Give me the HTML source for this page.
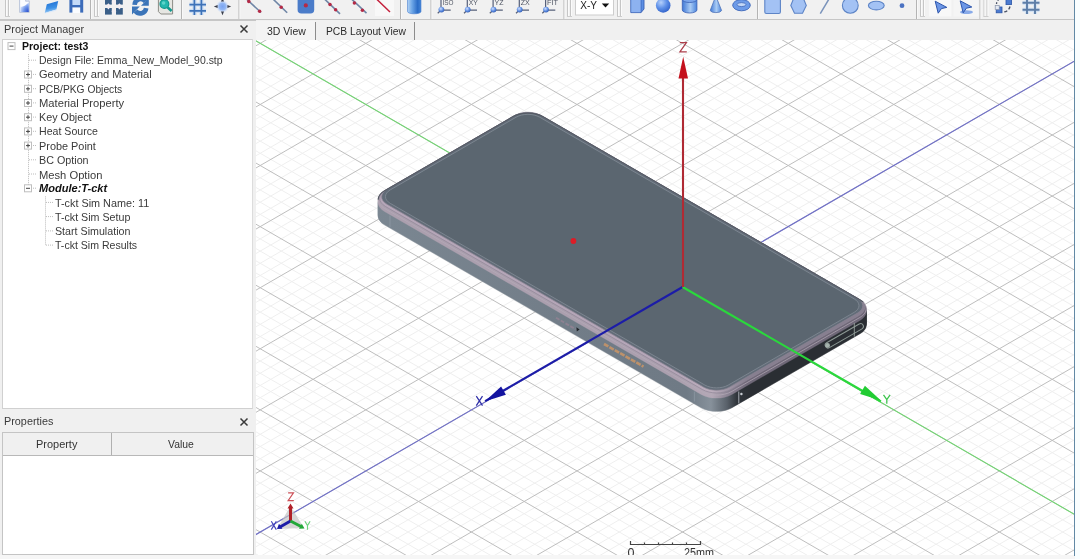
<!DOCTYPE html>
<html><head><meta charset="utf-8">
<style>
html,body{margin:0;padding:0;}
html{background:#f0f0f0;}
#wrap{position:absolute;left:0;top:0;width:1080px;height:559px;filter:blur(0.45px);will-change:transform;}
body{width:1080px;height:559px;overflow:hidden;background:#f0f0f0;position:relative;font-family:"Liberation Sans",sans-serif;font-size:11px;color:#222;}
.abs{position:absolute;}
#toolbar{left:0;top:0;width:1075px;height:18.6px;background:#f1f1f1;border-bottom:2px solid #c6c6c6;}
#right{left:1075px;top:0;width:5px;height:559px;background:#f9feff;}
#rightTop{display:none;}
#vline{left:1073.8px;top:0;width:1.3px;height:555.5px;background:#6189a5;}
#pmhead{left:0;top:20px;width:254px;height:20px;}
.ptitle{position:absolute;left:3.6px;top:3px;font-size:11.4px;color:#3a3a3a;white-space:nowrap;transform-origin:0 0;}
.closex{position:absolute;left:239px;top:4px;width:10px;height:10px;}
#tree{left:2px;top:39px;width:249px;height:368px;background:#fff;border:1px solid #d0d0d0;border-right-color:#dcdcdc;}
#prophead{left:0;top:411px;width:254px;height:21px;}
#proptable{left:2px;top:432px;width:249.5px;height:121px;background:#fff;border:1px solid #c4c4c4;}
#propth{left:0;top:0;width:250px;height:22px;background:#f0f0f0;border-bottom:1px solid #b8b8b8;}
.th{position:absolute;top:4.5px;font-size:11.4px;color:#333;white-space:nowrap;transform-origin:0 0;}
#tabs{left:256px;top:20px;width:818px;height:20px;background:#f0f0f0;}
.tab{position:absolute;top:4.5px;font-size:11.3px;color:#2c2c2c;white-space:nowrap;transform-origin:0 0;}
.tsep{position:absolute;top:1.5px;width:1.4px;height:18.5px;background:#8c8c8c;}
#vp{left:256px;top:40px;width:818px;height:515px;background:#fff;overflow:hidden;}
#bottom{left:0;top:555px;width:1080px;height:4px;background:#f6f6f6;}
.ti{position:absolute;transform-origin:0 0;white-space:nowrap;font-size:11.3px;color:#3a3a3a;line-height:14px;height:14px;}
.b{font-weight:bold;color:#111;}
</style></head><body><div id="wrap">
<div id="toolbar" class="abs"><!--TB--><svg class="abs" style="left:0;top:0" width="1075" height="19" viewBox="0 0 1075 19">
<defs>
<linearGradient id="bl" x1="0" y1="0" x2="1" y2="1"><stop offset="0" stop-color="#cfe0fa"/><stop offset="0.5" stop-color="#6f9be6"/><stop offset="1" stop-color="#3565c0"/></linearGradient>
<linearGradient id="blh" x1="0" y1="0" x2="1" y2="0"><stop offset="0" stop-color="#3f78d6"/><stop offset="0.55" stop-color="#a9cbf4"/><stop offset="1" stop-color="#4a84dc"/></linearGradient>
<radialGradient id="sph" cx="0.35" cy="0.3" r="0.8"><stop offset="0" stop-color="#b5d0fb"/><stop offset="0.5" stop-color="#5d8fe8"/><stop offset="1" stop-color="#2c5cc4"/></radialGradient>
<radialGradient id="ball" cx="0.4" cy="0.35" r="0.7"><stop offset="0" stop-color="#cfe0ff"/><stop offset="0.6" stop-color="#5a8ae0"/><stop offset="1" stop-color="#2f59b0"/></radialGradient>
<radialGradient id="nd" cx="1" cy="1" r="1.1"><stop offset="0" stop-color="#2348c8"/><stop offset="0.55" stop-color="#6f95ea"/><stop offset="1" stop-color="#dbe6fb"/></radialGradient>
<linearGradient id="fo" x1="0.3" y1="0" x2="0.5" y2="1"><stop offset="0" stop-color="#1f6fd2"/><stop offset="0.6" stop-color="#3f92e6"/><stop offset="1" stop-color="#a9d4f8"/></linearGradient>
<radialGradient id="glow" cx="0.5" cy="0.5" r="0.5"><stop offset="0" stop-color="#7aa4f2"/><stop offset="0.55" stop-color="#94b8f4"/><stop offset="1" stop-color="#dfeafc" stop-opacity="0.2"/></radialGradient>
<linearGradient id="blc" x1="0" y1="0" x2="1" y2="0"><stop offset="0" stop-color="#b4d4f6"/><stop offset="0.35" stop-color="#6aa4e6"/><stop offset="0.75" stop-color="#2b6cc6"/><stop offset="1" stop-color="#4585d6"/></linearGradient>
<g id="grip"><path d="M0.5 0V16.5M3.5 0V16.5" stroke="#c6c6c6" stroke-width="1"/><path d="M1.5 0V16.5M4.5 0V16.5" stroke="#fbfbfb" stroke-width="1"/><path d="M0 16.5H5" stroke="#cdcdcd"/></g>
<g id="sep"><path d="M0.5 0V19" stroke="#b4b4b4" stroke-width="1"/><path d="M1.5 0V19" stroke="#f8f8f8" stroke-width="1"/></g>
<g id="vw"><path d="M1.8 9.5V0M2.5 10.2H11.5" stroke="#56607a" stroke-width="1.2" fill="none"/><path d="M2 10L-1.5 13.3" stroke="#56607a" stroke-width="1.2"/><circle cx="2.2" cy="9.6" r="2.9" fill="url(#ball)"/></g>
</defs>
<use href="#grip" x="5"/>
<use href="#sep" x="90"/><use href="#grip" x="94"/>
<use href="#sep" x="181"/><use href="#sep" x="238.5"/>
<use href="#sep" x="400"/><use href="#sep" x="430.5"/>
<use href="#sep" x="563.5"/><use href="#grip" x="567"/>
<use href="#grip" x="617"/>
<use href="#sep" x="757"/>
<use href="#sep" x="916"/><use href="#grip" x="920"/>
<use href="#sep" x="979.5"/><use href="#grip" x="983.5"/>
<path d="M19.6 -3H25.6L29.3 1.2V12.4H19.6Z" fill="#fbfcff" stroke="#b4bfd6" stroke-width="0.9"/><path d="M25.6 -3V1.2H29.3" fill="#dfe6f4" stroke="#aab6d0" stroke-width="0.7"/><path d="M20.3 12V6.5C23 7.5 26 5 28.8 2.5V12Z" fill="url(#nd)"/>
<path d="M46.8 4.2L58.2 1.1L56.4 9.6L44.8 12.9Z" fill="url(#fo)"/><path d="M44.8 12.9L56.4 9.6L56.1 10.8L45 13.6Z" fill="#dbe9fb"/>
<rect x="69.4" y="-3" width="13.8" height="15.6" fill="#3c6cba"/><rect x="72.4" y="-3" width="7.8" height="8" fill="#c4daf8"/><rect x="72.4" y="7.4" width="7.8" height="5.6" fill="#fafcff"/>
<g fill="#3b5f88"><path d="M105 -1h6.8v5.6H105z"/><path d="M116 -1h6.8v5.6h-6.8z"/><path d="M105 8h6.8v6.6H105z"/><path d="M116 8h6.8v6.6h-6.8z"/></g><g fill="#f3eef2"><path d="M108.4 3.2l2.6 3.1-2.6 3.1-2.6-3.1z"/><path d="M119.4 3.2l2.6 3.1-2.6 3.1-2.6-3.1z"/><path d="M113.9 -0.5l2.4 2.6-2.4 2.6-2.4-2.6z"/><path d="M113.9 8.6l2.4 2.6-2.4 2.6-2.4-2.6z"/></g>
<g fill="none" stroke="#3b74b8" stroke-width="4.6"><path d="M134.6 4.8A6 6 0 0 1 145.5 1.6"/><path d="M146.2 8.2A6 6 0 0 1 135.5 11"/></g><path d="M148.8 -2V5.8H141Z" fill="#3b74b8"/><path d="M132 14.4V6.6H139.8Z" fill="#3b74b8"/>
<path d="M158.4 -3H172.6V14H160.8L158.4 11.6Z" fill="#e6e6e2" stroke="#8c8c86" stroke-width="1"/><circle cx="164.4" cy="4" r="4.4" fill="#25b8ae" stroke="#12998f" stroke-width="1.2"/><circle cx="163.6" cy="3" r="1.8" fill="#5fd4ca"/><path d="M167.5 7.2L171.6 11" stroke="#12998f" stroke-width="2.6"/>
<g stroke="#c3daf6" stroke-width="4.4" opacity="0.75"><path d="M194.4 -2V15M201.4 -2V15M189.4 4.6H206M189.4 10.9H206"/></g><g stroke="#3d72b8" stroke-width="1.7"><path d="M194.4 -2V15M201.4 -2V15M189.4 4.6H206M189.4 10.9H206"/></g>
<circle cx="222.5" cy="6.5" r="6.4" fill="url(#glow)"/><path d="M213.8 6.5l3.8 -1.5v3zM231.2 6.5l-3.8 -1.5v3zM222.5 15.2l-1.5 -3.8h3zM222.5 -2.2l-1.5 3.8h3z" fill="#3a3f4c"/>
<path d="M246.5 -1L261 12.5" stroke="#6f86a6" stroke-width="1.6"/><circle cx="248.8" cy="1.6" r="1.75" fill="#b42a46"/><circle cx="259.6" cy="11.2" r="1.75" fill="#b42a46"/>
<path d="M273 -1L287.2 12.8" stroke="#6f86a6" stroke-width="1.6"/><circle cx="281.2" cy="7.3" r="1.75" fill="#b42a46"/>
<rect x="297.6" y="-4" width="16.6" height="17.6" rx="3.8" fill="#4b7cc9"/><circle cx="305.8" cy="5.4" r="2.1" fill="#b42a46"/>
<path d="M324.5 -1L340 13.8" stroke="#6f86a6" stroke-width="1.6"/><circle cx="330" cy="4.4" r="1.75" fill="#b42a46"/><circle cx="335.6" cy="9.8" r="1.75" fill="#b42a46"/>
<path d="M351.5 -1L366.5 13.2" stroke="#6f86a6" stroke-width="1.6"/><circle cx="354.4" cy="2.9" r="1.75" fill="#b42a46"/><circle cx="362.4" cy="10.3" r="1.75" fill="#b42a46"/>
<rect x="375" y="0" width="19" height="16" fill="#f8f8f8"/><path d="M377 -0.5L390 12" stroke="#c4203c" stroke-width="1.5"/>
<path d="M407.5 -3H421V11.5A6.75 2.3 0 0 1 407.5 11.5Z" fill="url(#blc)" stroke="#4a80d0" stroke-width="0.6"/>
<use href="#vw" x="439.2"/><text x="442.4" y="5.1" font-family="Liberation Sans, sans-serif" font-size="8" fill="#505664" textLength="11" lengthAdjust="spacingAndGlyphs">ISO</text>
<use href="#vw" x="465.5"/><text x="468.7" y="5.1" font-family="Liberation Sans, sans-serif" font-size="8" fill="#505664" textLength="9" lengthAdjust="spacingAndGlyphs">XY</text>
<use href="#vw" x="491.3"/><text x="494.5" y="5.1" font-family="Liberation Sans, sans-serif" font-size="8" fill="#505664" textLength="9" lengthAdjust="spacingAndGlyphs">YZ</text>
<use href="#vw" x="517.5"/><text x="520.7" y="5.1" font-family="Liberation Sans, sans-serif" font-size="8" fill="#505664" textLength="9" lengthAdjust="spacingAndGlyphs">ZX</text>
<use href="#vw" x="543.8"/><text x="547.0" y="5.1" font-family="Liberation Sans, sans-serif" font-size="8" fill="#505664" textLength="11" lengthAdjust="spacingAndGlyphs">FIT</text>
<rect x="575.5" y="-2" width="38" height="17" fill="#fff" stroke="#cdcdcd" stroke-width="1"/><text x="580.3" y="9.2" font-family="Liberation Sans, sans-serif" font-size="11.3" fill="#222" textLength="16.8" lengthAdjust="spacingAndGlyphs">X-Y</text><path d="M601.8 3.6h7.4l-3.7 4z" fill="#111"/>
<path d="M630.8 -0.5L633.8 -3H644V9L641 12.6H630.8Z" fill="#5c8fe4" stroke="#3960b4" stroke-width="0.9"/><path d="M630.8 -0.5H641V12.6M641 -0.5L644 -3" fill="none" stroke="#3960b4" stroke-width="0.8"/><rect x="631.3" y="0" width="9.3" height="12.2" fill="#8db2f0"/>
<circle cx="663.2" cy="5.4" r="7.3" fill="url(#sph)"/>
<path d="M682.3 -1V10A7.3 3 0 0 0 696.9 10V-1Z" fill="url(#blh)" stroke="#3960b4" stroke-width="0.8"/><ellipse cx="689.6" cy="-0.5" rx="7.3" ry="3" fill="#7ba6ec" stroke="#3960b4" stroke-width="0.8"/>
<path d="M715.8 -4L710.2 10.5A5.8 2.6 0 0 0 721.6 10.5Z" fill="url(#blh)" stroke="#5074b8" stroke-width="0.8"/>
<ellipse cx="741.5" cy="5.2" rx="8.8" ry="5.6" fill="#6d9be8" stroke="#3d66b8" stroke-width="0.9"/><ellipse cx="741.5" cy="4.6" rx="4.4" ry="2" fill="#c4d8f6" stroke="#3d66b8" stroke-width="0.8"/>
<rect x="764.8" y="-4" width="15.6" height="17.5" rx="1.6" fill="#a3c2f4" stroke="#5d84c6" stroke-width="1.1"/>
<path d="M794 -2.5H803L806.3 5.5L802.5 13.2H794.5L790.8 5.5Z" fill="#a3c2f4" stroke="#5d84c6" stroke-width="1.1"/>
<path d="M829 -1L820.3 13.6" stroke="#7a93bb" stroke-width="1.5"/>
<circle cx="850.3" cy="5.4" r="7.9" fill="#a3c2f4" stroke="#5d84c6" stroke-width="1.1"/>
<ellipse cx="876.3" cy="5.6" rx="7.9" ry="4.3" fill="#a3c2f4" stroke="#5d84c6" stroke-width="1.1"/>
<circle cx="902" cy="5.7" r="2.4" fill="#4b72c2"/>
<rect x="929" y="0" width="22.5" height="16.5" fill="#f8f8f8"/><rect x="953.5" y="0" width="25" height="16.5" fill="#f5f5f5"/>
<path d="M935.2 1.2L946.8 7.4L941.4 8.6L938.2 13.2Z" fill="#6d97e6" stroke="#2d55ac" stroke-width="1"/>
<ellipse cx="966.5" cy="12.2" rx="6.4" ry="1.9" fill="#6d97e6" opacity="0.8"/><path d="M960.2 0.8L971.8 7L966.4 8.2L963.2 12.8Z" fill="#6d97e6" stroke="#2d55ac" stroke-width="1"/>
<rect x="1006" y="-1" width="5.6" height="5.6" fill="#4b7ad0" stroke="#2c55a6" stroke-width="0.8"/><rect x="996.2" y="7" width="5.8" height="5.8" fill="#4b7ad0" stroke="#2c55a6" stroke-width="0.8"/><rect x="995.2" y="5.6" width="4" height="4" fill="#e4e9f2" stroke="#8892a8" stroke-width="0.7"/><path d="M1000 -1.5A7 7 0 0 0 996.5 4M1010 6.5A7 7 0 0 1 1003 12" fill="none" stroke="#4a5266" stroke-width="1.3" stroke-dasharray="3.2 1.8"/>
<g stroke="#cfe0f4" stroke-width="4.2" opacity="0.8"><path d="M1027 -2V14M1035 -2V14M1022.5 2.8H1039.5M1022.5 9.8H1039.5"/></g><g stroke="#5d7ea8" stroke-width="1.9"><path d="M1027 -2V14M1035 -2V14M1022.5 2.8H1039.5M1022.5 9.8H1039.5"/></g>
</svg><!--/TB--></div>
<div id="pmhead" class="abs"><span class="ptitle" id="pt1" style="transform:scaleX(0.9584)">Project Manager</span>
<svg class="closex" viewBox="0 0 10 10"><path d="M1.5 1.5 L8.5 8.5 M8.5 1.5 L1.5 8.5" stroke="#3a3a3a" stroke-width="1.5"/></svg></div>
<div id="tree" class="abs"><!--TR--><svg class="abs" style="left:-3px;top:-40px" width="254" height="408" viewBox="0 0 254 408"><path d="M28.5 54.2V188.2" stroke="#bcbcbc" stroke-width="1" stroke-dasharray="1 1"/><path d="M45.5 196.4V245.1" stroke="#bcbcbc" stroke-width="1" stroke-dasharray="1 1"/><rect x="8.0" y="42.6" width="7" height="7" fill="#fff" stroke="#bebebe" stroke-width="1"/><path d="M9.5 46.1h4" stroke="#444" stroke-width="1"/><path d="M29 60.2H36" stroke="#bcbcbc" stroke-width="1" stroke-dasharray="1 1"/><path d="M29 74.4H36" stroke="#bcbcbc" stroke-width="1" stroke-dasharray="1 1"/><rect x="24.5" y="71.0" width="7" height="7" fill="#fff" stroke="#bebebe" stroke-width="1"/><path d="M26.0 74.5h4" stroke="#444" stroke-width="1"/><path d="M28.0 72.5v4" stroke="#444" stroke-width="1"/><path d="M29 88.7H36" stroke="#bcbcbc" stroke-width="1" stroke-dasharray="1 1"/><rect x="24.5" y="85.3" width="7" height="7" fill="#fff" stroke="#bebebe" stroke-width="1"/><path d="M26.0 88.8h4" stroke="#444" stroke-width="1"/><path d="M28.0 86.8v4" stroke="#444" stroke-width="1"/><path d="M29 102.9H36" stroke="#bcbcbc" stroke-width="1" stroke-dasharray="1 1"/><rect x="24.5" y="99.5" width="7" height="7" fill="#fff" stroke="#bebebe" stroke-width="1"/><path d="M26.0 103.0h4" stroke="#444" stroke-width="1"/><path d="M28.0 101.0v4" stroke="#444" stroke-width="1"/><path d="M29 117.1H36" stroke="#bcbcbc" stroke-width="1" stroke-dasharray="1 1"/><rect x="24.5" y="113.7" width="7" height="7" fill="#fff" stroke="#bebebe" stroke-width="1"/><path d="M26.0 117.2h4" stroke="#444" stroke-width="1"/><path d="M28.0 115.2v4" stroke="#444" stroke-width="1"/><path d="M29 131.3H36" stroke="#bcbcbc" stroke-width="1" stroke-dasharray="1 1"/><rect x="24.5" y="127.9" width="7" height="7" fill="#fff" stroke="#bebebe" stroke-width="1"/><path d="M26.0 131.4h4" stroke="#444" stroke-width="1"/><path d="M28.0 129.4v4" stroke="#444" stroke-width="1"/><path d="M29 145.5H36" stroke="#bcbcbc" stroke-width="1" stroke-dasharray="1 1"/><rect x="24.5" y="142.1" width="7" height="7" fill="#fff" stroke="#bebebe" stroke-width="1"/><path d="M26.0 145.6h4" stroke="#444" stroke-width="1"/><path d="M28.0 143.6v4" stroke="#444" stroke-width="1"/><path d="M29 159.8H36" stroke="#bcbcbc" stroke-width="1" stroke-dasharray="1 1"/><path d="M29 174.0H36" stroke="#bcbcbc" stroke-width="1" stroke-dasharray="1 1"/><path d="M29 188.2H36" stroke="#bcbcbc" stroke-width="1" stroke-dasharray="1 1"/><rect x="24.5" y="184.8" width="7" height="7" fill="#fff" stroke="#bebebe" stroke-width="1"/><path d="M26.0 188.3h4" stroke="#444" stroke-width="1"/><path d="M46 202.4H53" stroke="#bcbcbc" stroke-width="1" stroke-dasharray="1 1"/><path d="M46 216.6H53" stroke="#bcbcbc" stroke-width="1" stroke-dasharray="1 1"/><path d="M46 230.9H53" stroke="#bcbcbc" stroke-width="1" stroke-dasharray="1 1"/><path d="M46 245.1H53" stroke="#bcbcbc" stroke-width="1" stroke-dasharray="1 1"/></svg>
<span class="ti b" id="t0" style="left:19.1px;top:-1.5px;transform:scaleX(0.9276);">Project: test3</span>
<span class="ti" id="t1" style="left:35.6px;top:12.7px;transform:scaleX(0.9253);">Design File: Emma_New_Model_90.stp</span>
<span class="ti" id="t2" style="left:35.6px;top:26.9px;transform:scaleX(0.9809);">Geometry and Material</span>
<span class="ti" id="t3" style="left:35.6px;top:42.2px;transform:scaleX(0.9076);">PCB/PKG Objects</span>
<span class="ti" id="t4" style="left:35.6px;top:56.4px;transform:scaleX(0.9905);">Material Property</span>
<span class="ti" id="t5" style="left:35.6px;top:69.6px;transform:scaleX(0.9517);">Key Object</span>
<span class="ti" id="t6" style="left:35.6px;top:83.8px;transform:scaleX(0.9379);">Heat Source</span>
<span class="ti" id="t7" style="left:35.6px;top:99.0px;transform:scaleX(0.9636);">Probe Point</span>
<span class="ti" id="t8" style="left:35.6px;top:113.3px;transform:scaleX(0.9515);">BC Option</span>
<span class="ti" id="t9" style="left:35.6px;top:127.5px;transform:scaleX(0.9897);">Mesh Option</span>
<span class="ti b" id="t10" style="left:35.6px;top:140.7px;transform:scaleX(0.9775);font-style:italic;">Module:T-ckt</span>
<span class="ti" id="t11" style="left:52.1px;top:155.9px;transform:scaleX(0.9577);">T-ckt Sim Name: 11</span>
<span class="ti" id="t12" style="left:52.1px;top:170.1px;transform:scaleX(0.9457);">T-ckt Sim Setup</span>
<span class="ti" id="t13" style="left:52.1px;top:184.4px;transform:scaleX(0.9455);">Start Simulation</span>
<span class="ti" id="t14" style="left:52.1px;top:197.6px;transform:scaleX(0.9341);">T-ckt Sim Results</span><!--/TR--></div>
<div id="prophead" class="abs"><span class="ptitle" id="pt2" style="transform:scaleX(0.9514);top:4px">Properties</span>
<svg class="closex" style="top:6px" viewBox="0 0 10 10"><path d="M1.5 1.5 L8.5 8.5 M8.5 1.5 L1.5 8.5" stroke="#3a3a3a" stroke-width="1.5"/></svg></div>
<div id="proptable" class="abs"><div id="propth" class="abs">
<span class="th" id="th1" style="transform:scaleX(0.9614);left:32.6px">Property</span><span class="th" id="th2" style="transform:scaleX(0.9118);left:165px">Value</span>
<div class="abs" style="left:108px;top:0;width:1px;height:22px;background:#b0b0b0"></div></div></div>
<div id="tabs" class="abs"><div class="abs" style="left:0;top:1px;width:59px;height:19px;background:#f4f4f4"></div><span class="tab" id="tab1" style="transform:scaleX(0.9266);left:10.9px">3D View</span><div class="tsep" style="left:58.6px"></div>
<span class="tab" id="tab2" style="transform:scaleX(0.912);left:70.3px">PCB Layout View</span><div class="tsep" style="left:157.6px"></div></div>
<div id="vp" class="abs"></div>
<!--VP--><svg class="abs" style="left:256px;top:40px" width="818" height="515" viewBox="256 40 818 515">
<path d="M566.4 -500.2L2044.8 354.9M798.8 -500.2L-679.6 354.9M555.9 -494.1L2034.3 361.0M809.3 -494.1L-669.1 361.0M545.3 -488.0L2023.7 367.1M819.9 -488.0L-658.5 367.1M534.8 -481.9L2013.2 373.2M830.4 -481.9L-648.0 373.2M513.6 -469.7L1992.0 385.4M851.6 -469.7L-626.8 385.4M503.1 -463.6L1981.5 391.5M862.1 -463.6L-616.3 391.5M492.5 -457.5L1970.9 397.6M872.7 -457.5L-605.7 397.6M482.0 -451.4L1960.4 403.8M883.2 -451.4L-595.2 403.8M460.8 -439.2L1939.2 416.0M904.4 -439.2L-574.0 416.0M450.3 -433.0L1928.7 422.1M914.9 -433.0L-563.5 422.1M439.7 -426.9L1918.1 428.2M925.5 -426.9L-552.9 428.2M429.2 -420.8L1907.6 434.3M936.0 -420.8L-542.4 434.3M408.0 -408.6L1886.4 446.5M957.2 -408.6L-521.2 446.5M397.5 -402.5L1875.9 452.6M967.7 -402.5L-510.7 452.6M386.9 -396.4L1865.3 458.7M978.3 -396.4L-500.1 458.7M376.4 -390.3L1854.8 464.8M988.8 -390.3L-489.6 464.8M355.2 -378.1L1833.6 477.0M1010.0 -378.1L-468.4 477.0M344.7 -372.0L1823.1 483.2M1020.5 -372.0L-457.9 483.2M334.1 -365.9L1812.5 489.3M1031.1 -365.9L-447.3 489.3M323.6 -359.7L1802.0 495.4M1041.6 -359.7L-436.8 495.4M302.4 -347.5L1780.8 507.6M1062.8 -347.5L-415.6 507.6M291.9 -341.4L1770.3 513.7M1073.3 -341.4L-405.1 513.7M281.3 -335.3L1759.7 519.8M1083.9 -335.3L-394.5 519.8M270.8 -329.2L1749.2 525.9M1094.4 -329.2L-384.0 525.9M249.6 -317.0L1728.0 538.1M1115.6 -317.0L-362.8 538.1M239.1 -310.9L1717.5 544.2M1126.1 -310.9L-352.3 544.2M228.5 -304.8L1706.9 550.3M1136.7 -304.8L-341.7 550.3M218.0 -298.7L1696.4 556.5M1147.2 -298.7L-331.2 556.5M196.8 -286.5L1675.2 568.7M1168.4 -286.5L-310.0 568.7M186.3 -280.3L1664.7 574.8M1178.9 -280.3L-299.5 574.8M175.7 -274.2L1654.1 580.9M1189.5 -274.2L-288.9 580.9M165.2 -268.1L1643.6 587.0M1200.0 -268.1L-278.4 587.0M144.0 -255.9L1622.4 599.2M1221.2 -255.9L-257.2 599.2M133.5 -249.8L1611.9 605.3M1231.7 -249.8L-246.7 605.3M122.9 -243.7L1601.3 611.4M1242.3 -243.7L-236.1 611.4M112.4 -237.6L1590.8 617.5M1252.8 -237.6L-225.6 617.5M91.2 -225.4L1569.6 629.7M1274.0 -225.4L-204.4 629.7M80.7 -219.3L1559.1 635.9M1284.5 -219.3L-193.9 635.9M70.1 -213.2L1548.5 642.0M1295.1 -213.2L-183.3 642.0M59.6 -207.0L1538.0 648.1M1305.6 -207.0L-172.8 648.1M38.4 -194.8L1516.8 660.3M1326.8 -194.8L-151.6 660.3M27.9 -188.7L1506.3 666.4M1337.3 -188.7L-141.1 666.4M17.3 -182.6L1495.7 672.5M1347.9 -182.6L-130.5 672.5M6.8 -176.5L1485.2 678.6M1358.4 -176.5L-120.0 678.6M-14.4 -164.3L1464.0 690.8M1379.6 -164.3L-98.8 690.8M-24.9 -158.2L1453.5 696.9M1390.1 -158.2L-88.3 696.9M-35.5 -152.1L1442.9 703.0M1400.7 -152.1L-77.7 703.0M-46.0 -146.0L1432.4 709.2M1411.2 -146.0L-67.2 709.2M-67.2 -133.8L1411.2 721.4M1432.4 -133.8L-46.0 721.4M-77.7 -127.6L1400.7 727.5M1442.9 -127.6L-35.5 727.5M-88.3 -121.5L1390.1 733.6M1453.5 -121.5L-24.9 733.6M-98.8 -115.4L1379.6 739.7M1464.0 -115.4L-14.4 739.7M-120.0 -103.2L1358.4 751.9M1485.2 -103.2L6.8 751.9M-130.5 -97.1L1347.9 758.0M1495.7 -97.1L17.3 758.0M-141.1 -91.0L1337.3 764.1M1506.3 -91.0L27.9 764.1M-151.6 -84.9L1326.8 770.2M1516.8 -84.9L38.4 770.2M-172.8 -72.7L1305.6 782.4M1538.0 -72.7L59.6 782.4M-183.3 -66.6L1295.1 788.6M1548.5 -66.6L70.1 788.6M-193.9 -60.5L1284.5 794.7M1559.1 -60.5L80.7 794.7M-204.4 -54.3L1274.0 800.8M1569.6 -54.3L91.2 800.8M-225.6 -42.1L1252.8 813.0M1590.8 -42.1L112.4 813.0M-236.1 -36.0L1242.3 819.1M1601.3 -36.0L122.9 819.1M-246.7 -29.9L1231.7 825.2M1611.9 -29.9L133.5 825.2M-257.2 -23.8L1221.2 831.3M1622.4 -23.8L144.0 831.3M-278.4 -11.6L1200.0 843.5M1643.6 -11.6L165.2 843.5M-288.9 -5.5L1189.5 849.6M1654.1 -5.5L175.7 849.6M-299.5 0.6L1178.9 855.7M1664.7 0.6L186.3 855.7M-310.0 6.7L1168.4 861.9M1675.2 6.7L196.8 861.9M-331.2 18.9L1147.2 874.1M1696.4 18.9L218.0 874.1M-341.7 25.1L1136.7 880.2M1706.9 25.1L228.5 880.2M-352.3 31.2L1126.1 886.3M1717.5 31.2L239.1 886.3M-362.8 37.3L1115.6 892.4M1728.0 37.3L249.6 892.4M-384.0 49.5L1094.4 904.6M1749.2 49.5L270.8 904.6M-394.5 55.6L1083.9 910.7M1759.7 55.6L281.3 910.7M-405.1 61.7L1073.3 916.8M1770.3 61.7L291.9 916.8M-415.6 67.8L1062.8 922.9M1780.8 67.8L302.4 922.9M-436.8 80.0L1041.6 935.1M1802.0 80.0L323.6 935.1M-447.3 86.1L1031.1 941.3M1812.5 86.1L334.1 941.3M-457.9 92.2L1020.5 947.4M1823.1 92.2L344.7 947.4M-468.4 98.4L1010.0 953.5M1833.6 98.4L355.2 953.5M-489.6 110.6L988.8 965.7M1854.8 110.6L376.4 965.7M-500.1 116.7L978.3 971.8M1865.3 116.7L386.9 971.8M-510.7 122.8L967.7 977.9M1875.9 122.8L397.5 977.9M-521.2 128.9L957.2 984.0M1886.4 128.9L408.0 984.0M-542.4 141.1L936.0 996.2M1907.6 141.1L429.2 996.2M-552.9 147.2L925.5 1002.3M1918.1 147.2L439.7 1002.3M-563.5 153.3L914.9 1008.4M1928.7 153.3L450.3 1008.4M-574.0 159.4L904.4 1014.6M1939.2 159.4L460.8 1014.6M-595.2 171.6L883.2 1026.8M1960.4 171.6L482.0 1026.8M-605.7 177.8L872.7 1032.9M1970.9 177.8L492.5 1032.9M-616.3 183.9L862.1 1039.0M1981.5 183.9L503.1 1039.0M-626.8 190.0L851.6 1045.1M1992.0 190.0L513.6 1045.1M-648.0 202.2L830.4 1057.3M2013.2 202.2L534.8 1057.3M-658.5 208.3L819.9 1063.4M2023.7 208.3L545.3 1063.4M-669.1 214.4L809.3 1069.5M2034.3 214.4L555.9 1069.5M-679.6 220.5L798.8 1075.6M2044.8 220.5L566.4 1075.6" stroke="#efefef" stroke-width="1" fill="none"/>
<path d="M577.0 -506.3L2055.4 348.8M788.2 -506.3L-690.2 348.8M524.2 -475.8L2002.6 379.3M841.0 -475.8L-637.4 379.3M471.4 -445.3L1949.8 409.9M893.8 -445.3L-584.6 409.9M418.6 -414.7L1897.0 440.4M946.6 -414.7L-531.8 440.4M365.8 -384.2L1844.2 470.9M999.4 -384.2L-479.0 470.9M313.0 -353.6L1791.4 501.5M1052.2 -353.6L-426.2 501.5M260.2 -323.1L1738.6 532.0M1105.0 -323.1L-373.4 532.0M207.4 -292.6L1685.8 562.6M1157.8 -292.6L-320.6 562.6M154.6 -262.0L1633.0 593.1M1210.6 -262.0L-267.8 593.1M101.8 -231.5L1580.2 623.6M1263.4 -231.5L-215.0 623.6M49.0 -200.9L1527.4 654.2M1316.2 -200.9L-162.2 654.2M-3.8 -170.4L1474.6 684.7M1369.0 -170.4L-109.4 684.7M-56.6 -139.9L1421.8 715.3M1421.8 -139.9L-56.6 715.3M-109.4 -109.3L1369.0 745.8M1474.6 -109.3L-3.8 745.8M-162.2 -78.8L1316.2 776.3M1527.4 -78.8L49.0 776.3M-215.0 -48.2L1263.4 806.9M1580.2 -48.2L101.8 806.9M-267.8 -17.7L1210.6 837.4M1633.0 -17.7L154.6 837.4M-320.6 12.8L1157.8 868.0M1685.8 12.8L207.4 868.0M-373.4 43.4L1105.0 898.5M1738.6 43.4L260.2 898.5M-426.2 73.9L1052.2 929.0M1791.4 73.9L313.0 929.0M-479.0 104.5L999.4 959.6M1844.2 104.5L365.8 959.6M-531.8 135.0L946.6 990.1M1897.0 135.0L418.6 990.1M-584.6 165.5L893.8 1020.7M1949.8 165.5L471.4 1020.7M-637.4 196.1L841.0 1051.2M2002.6 196.1L524.2 1051.2M-690.2 226.6L788.2 1081.7M2055.4 226.6L577.0 1081.7" stroke="#bebebe" stroke-width="1" fill="none"/>
<path d="M1421.8 -139.9L-56.6 715.3" stroke="#7070c8" stroke-width="1.15"/>
<path d="M-56.6 -139.9L1421.8 715.3" stroke="#72d672" stroke-width="1.1"/>
<defs><path id="rr" d="M512.58 116.81L384.54 190.77C376.09 195.66 376.09 203.58 384.54 208.46L701.24 391.40C709.70 396.29 723.41 396.29 731.86 391.40L859.90 317.44C868.36 312.55 868.36 304.63 859.90 299.75L543.21 116.81C534.75 111.92 521.04 111.92 512.58 116.81Z"/><linearGradient id="gs" gradientUnits="userSpaceOnUse" x1="369" y1="0" x2="751" y2="0"><stop offset="0" stop-color="#7b8792"/><stop offset="0.5" stop-color="#727d88"/><stop offset="0.832" stop-color="#6f7a85"/><stop offset="0.895" stop-color="#87919b"/><stop offset="0.937" stop-color="#59616a"/><stop offset="0.963" stop-color="#30353b"/><stop offset="1" stop-color="#2a2e33"/></linearGradient><linearGradient id="gb" gradientUnits="userSpaceOnUse" x1="677" y1="0" x2="747" y2="0"><stop offset="0" stop-color="#ab9fae"/><stop offset="0.5" stop-color="#b4a8b6"/><stop offset="0.72" stop-color="#8c8494"/><stop offset="1" stop-color="#6f6878"/></linearGradient><linearGradient id="gb2" gradientUnits="userSpaceOnUse" x1="677" y1="0" x2="747" y2="0"><stop offset="0" stop-color="#b5a6b8"/><stop offset="0.5" stop-color="#bcaebd"/><stop offset="0.72" stop-color="#a096a6"/><stop offset="1" stop-color="#877f90"/></linearGradient><clipPath id="farclip"><path d="M364.2 196.6L527.9 98.0L880.2 305.6L629.8 256.5Z"/></clipPath></defs>
<g fill="url(#gs)" stroke="url(#gs)" stroke-width="0.6"><use href="#rr" y="3.00"/><use href="#rr" y="3.95"/><use href="#rr" y="4.90"/><use href="#rr" y="5.85"/><use href="#rr" y="6.80"/><use href="#rr" y="7.75"/><use href="#rr" y="8.70"/><use href="#rr" y="9.65"/><use href="#rr" y="10.60"/><use href="#rr" y="11.55"/><use href="#rr" y="12.50"/><use href="#rr" y="13.45"/><use href="#rr" y="14.40"/><use href="#rr" y="15.35"/><use href="#rr" y="16.30"/></g>
<g fill="url(#gb)" stroke="url(#gb)" stroke-width="0.4"><use href="#rr" y="0.00"/><use href="#rr" y="1.00"/><use href="#rr" y="2.00"/><use href="#rr" y="3.00"/></g>
<use href="#rr" fill="url(#gb)" stroke="#b5aab8" stroke-width="0.7"/>
<path d="M513.68 116.18L385.64 190.14C377.78 194.68 377.78 202.03 385.64 206.57L702.33 389.51C710.18 394.04 722.92 394.04 730.77 389.51L858.81 315.54C866.66 311.01 866.66 303.65 858.81 299.12L542.12 116.18C534.26 111.64 521.53 111.64 513.68 116.18Z" fill="url(#gb2)" stroke="#8f8696" stroke-width="0.7"/>
<path d="M515.13 115.34L386.95 189.38C379.90 193.46 379.90 200.06 386.95 204.13L703.79 387.15C710.84 391.22 722.26 391.22 729.31 387.15L857.50 313.10C864.55 309.03 864.55 302.43 857.50 298.36L540.66 115.34C533.61 111.27 522.18 111.27 515.13 115.34Z" fill="#626c78" stroke="#8a8492" stroke-width="0.7"/>
<use href="#rr" fill="none" stroke="#545a64" stroke-width="1.1" clip-path="url(#farclip)"/>
<path d="M516.23 117.15L390.30 189.89C383.85 193.61 383.85 199.65 390.30 203.37L704.88 385.09C711.33 388.81 721.77 388.81 728.22 385.09L854.15 312.35C860.59 308.62 860.59 302.59 854.15 298.86L539.56 117.15C533.12 113.42 522.67 113.42 516.23 117.15Z" fill="#5b6670" stroke="#838b95" stroke-width="0.8"/>
<path d="M828 345.2L860.6 326.4" stroke="#8c9894" stroke-width="6.6" stroke-linecap="round"/>
<path d="M828 345.2L860.6 326.4" stroke="#2a2e33" stroke-width="4.6" stroke-linecap="round"/>
<path d="M854.3 322.8V336.6" stroke="#98a29e" stroke-width="0.9"/>
<circle cx="827.6" cy="345.4" r="2.4" fill="#a4b2ac"/>
<path d="M738.8 391.5V403.4" stroke="#b7bcc4" stroke-width="0.9"/><circle cx="741.4" cy="394" r="1.2" fill="#c8ccd2"/>
<path d="M694.4 391.5V401.5" stroke="#8c97a1" stroke-width="0.8"/><path d="M390 215.5V227" stroke="#909ba5" stroke-width="0.8"/>
<path d="M604 344L643.5 366.6" stroke="#c69468" stroke-width="2.6" stroke-dasharray="5 1.2" opacity="0.9"/>
<path d="M556 317.8L575.5 329.2" stroke="#9a8496" stroke-width="1.8" stroke-dasharray="4 1.5" opacity="0.7"/>
<path d="M576.4 327.2L579.6 329.4L576.8 331.6Z" fill="#23262b"/>
<path d="M682.6 287.0L485.1 401.1" stroke="#1c1ca8" stroke-width="2.1"/>
<path d="M682.6 287.0L880.9 401.5" stroke="#2ad83c" stroke-width="2.1"/>
<path d="M683.0 287.0L683.0 70" stroke="#b02a34" stroke-width="2.1"/>
<path d="M683.2 56.7L688.0 78.5L678.5 78.5Z" fill="#c4101c"/>
<path d="M485.1 401.3L501.1 386.6L505.9 394.8Z" fill="#1414a0"/>
<path d="M880.9 400.5L860.1 394.0L864.9 385.8Z" fill="#22cc33"/>
<g fill="none" stroke-width="1.25" stroke-linejoin="miter">
<path d="M679.8 42.7H686.4L679.9 51.8H686.8" stroke="#ac3e4a"/>
<path d="M476.3 396.2L482.5 405.6M482.5 396.2L476.3 405.6" stroke="#3030a8"/>
<path d="M883.5 394.8L886.8 399.6L890.1 394.8M886.8 399.6V403.8" stroke="#3cc44c"/>
</g>
<circle cx="573.4" cy="241" r="2.9" fill="#dc1c26"/>
<path d="M630.5 541V544.5H700.5V541M644.5 544.5v-2M658.5 544.5v-2M672.5 544.5v-2M686.5 544.5v-2" stroke="#444" stroke-width="1.2" fill="none"/>
<g font-family="Liberation Sans, sans-serif" font-size="12.5" fill="#333"><text x="627.5" y="557">0</text><text x="684" y="557" textLength="30" lengthAdjust="spacingAndGlyphs">25mm</text></g>
<path d="M290.5 506 L277 529 L304 528 Z" fill="#c4c4c4" opacity="0.7"/>
<path d="M290.5 521V507" stroke="#b02028" stroke-width="3"/><path d="M290.5 503.5l-3 5h6z" fill="#b02028"/>
<path d="M290.5 521L280 527" stroke="#1c1ca8" stroke-width="3"/><path d="M277 529l2-5.2 3.4 5z" fill="#1c1ca8"/>
<path d="M290.5 521L301 526.5" stroke="#22a838" stroke-width="3"/><path d="M304.5 528.5l-5.5 0.3 2.8-5z" fill="#22a838"/>
<g fill="none" stroke-width="1.15"><path d="M288.1 492.8H293.5L288.1 500.6H293.8" stroke="#cc5058"/><path d="M271.3 521.3L276.3 529.6M276.3 521.3L271.3 529.6" stroke="#4444bc"/><path d="M304.9 521.3L307.5 525.6L310.1 521.3M307.5 525.6V529.8" stroke="#6cd47c"/></g>
</svg><!--/VP-->
<div id="bottom" class="abs"></div>
<div id="right" class="abs"></div><div id="rightTop" class="abs"></div><div id="vline" class="abs"></div>
</div></body></html>
